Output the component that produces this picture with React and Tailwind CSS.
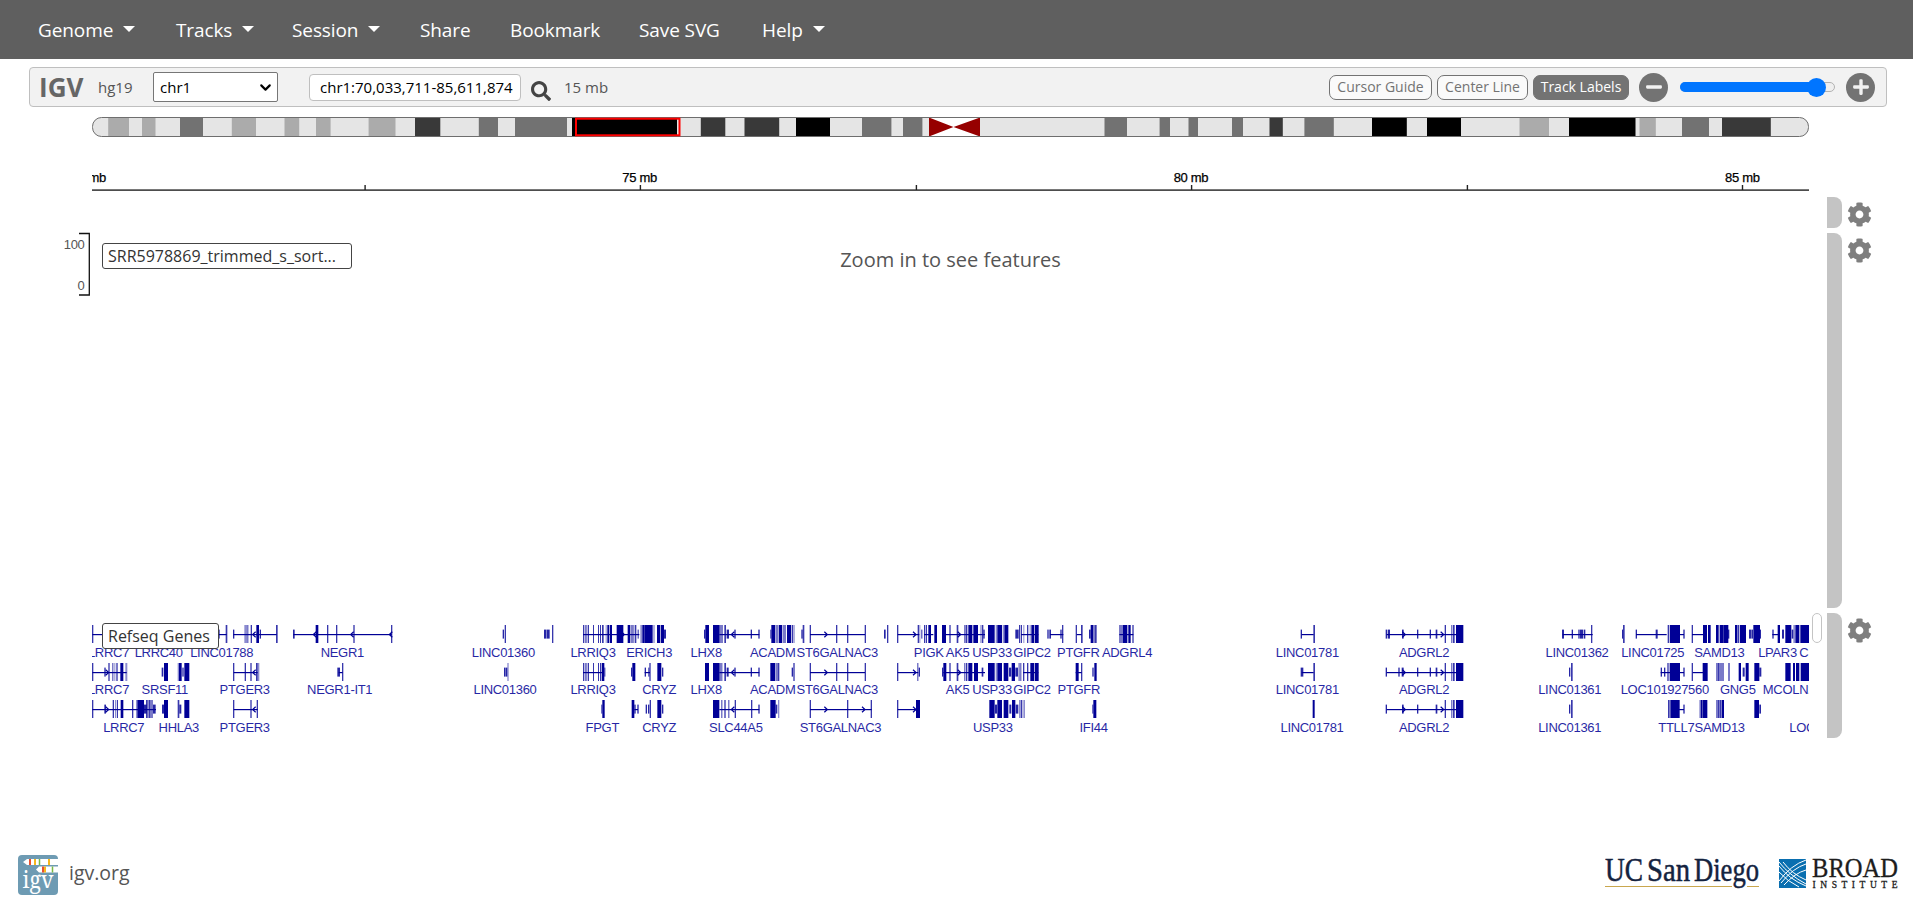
import React from "react";
import { FaCog, FaMinus, FaPlus, FaSearch } from "react-icons/fa";
import { ChevronDown } from "lucide-react";

const MENU = [
  { label: "Genome", caret: true, width: "w-[138px]" },
  { label: "Tracks", caret: true, width: "w-[116px]" },
  { label: "Session", caret: true, width: "w-[128px]" },
  { label: "Share", width: "w-[90px]" },
  { label: "Bookmark", width: "w-[129px]" },
  { label: "Save SVG", width: "w-[123px]" },
  { label: "Help", caret: true, width: "w-[80px]" },
];

const SHADE = { a: "#ababab", b: "#727272", c: "#393939", d: "#000000" };

// Stained bands of the chromosome: [start, end, shade]
const BANDS = [
  [108.2, 129, "a"], [142, 155.5, "a"], [180, 203, "b"], [231.8, 256, "a"],
  [284.5, 299.2, "a"], [316, 330.6, "a"], [368.6, 395.5, "a"], [415, 440.3, "c"],
  [478.8, 498, "b"], [515, 567, "b"], [572, 677, "d"], [700.8, 725.3, "c"],
  [744.5, 779.2, "c"], [796, 830, "d"], [862, 891.4, "b"], [903, 922.4, "b"],
  [1104.5, 1127, "b"], [1159.6, 1170, "b"], [1188.5, 1198, "b"], [1232, 1243, "b"],
  [1269.5, 1282.8, "c"], [1304.4, 1333.8, "b"], [1372, 1406.8, "d"], [1427, 1461, "d"],
  [1519.5, 1549, "a"], [1569, 1635.5, "d"], [1639.5, 1655.8, "a"], [1682, 1709, "b"],
  [1722, 1770.8, "c"],
];

// Features per row. T: coding exon, t: faint coding exon, S: non-coding exon,
// L: intron line, > and <: strand arrows. Units are thirds of a pixel.
const GENES = [
  {
    origin: 60,
    rows: [
      "T96,4 L97-127 S474,5 L474-500 T497,5 S519,4 L520-600 t553,8 T562,3 T572,4 <578 T589,8 S599,4 L600-650 T648,5 S699,5 L700-995 <760 T767,8 T801,4 T828,4 <872 T880,4 <988 T993,4",
      "T96,4 L97-200 S133,4 >146 T145,4 T157,3 t163,3 T169,4 T181,9 t196,6 S305,5 T312,12 t353,4 T357,8 S367,4 T373,15 T519,4 L521-593 T554,4 T571,4 <578 T588,5 t593,5 S832,8 T846,4 L836-848",
      "T96,4 L97-288 S133,5 >146 T158,4 t165,4 T171,3 T182,8 T216,4 t228,4 T232,20 S252,8 T258,5 t263,4 T267,5 T274,4 S279,8 S306,6 T312,12 T353,5 S358,6 T373,15 T519,4 L521-593 T571,4 <578 T590,4",
    ],
  },
  {
    origin: 440,
    rows: [
      "S188,4 T194,4 S312,7 S320,9 T336,4 T429,3 T434,3 t438,3 T443,4 T459,3 T474,3 T480,3 T486,5 L429-598 t497,3 T502,6 T510,6 T530,20 >553 T563,8 T574,4 t579,3 T584,5 S593,3 t601,6 T607,6 T613,25 t640,4 T651,10 T663,9 S672,6 S792,4 T796,11 T819,19 T838,4 T844,4 T853,5 S860,7 <874 L838-958 S883,4 S932,4 S955,4 S991,3 T994,12 T1009,4 T1016,10 T1028,3 T1033,4 T1041,12 T1055,4 t1060,4 S1084,4 T1088,5 T1109,4 L1110-1275 >1162 T1188,4 T1221,4 T1274,4",
      "S192,5 S198,4 t202,4 T429,3 T434,3 t438,3 T443,4 L429-490 T459,3 T474,3 T480,3 T485,8 S493,3 S573,4 T577,9 S614,4 S625,3 L614-630 T628,4 T652,12 S666,4 T795,12 T819,19 T838,4 T844,3 T853,5 S860,6 <874 L838-958 S883,4 S932,4 S955,4 T991,15 T1009,4 T1014,4 S1055,4 T1060,4 T1109,4 L1110-1275 >1162 T1188,4 T1221,4 T1274,4",
      "S484,3 T487,7 T575,8 S583,4 S592,4 L583-594 S617,4 S624,4 T629,4 T652,12 S666,4 T819,19 L838-958 T844,3 T853,4 T865,3 <874 T884,4 T933,4 S955,4 T991,16 S1007,5 t1014,4 T1109,4 L1110-1295 >1162 T1221,4 >1275 T1292,4",
    ],
  },
  {
    origin: 820,
    rows: [
      "S192,5 T201,4 T231,4 L233-298 >288 T293,4 t298,3 S304,3 T312,3 T317,4 L312-340 T325,8 T343,8 T366,12 T388,4 L366-495 T410,5 >422 T433,3 T437,5 T445,12 T460,14 t481,4 T486,4 S490,4 T504,20 t527,5 T532,14 t548,4 T553,12 S586,10 T597,4 T603,3 t610,3 L603-655 T621,4 t629,3 T634,8 T644,12 S682,4 S688,5 L690-730 S721,4 T726,4 T767,4 T783,5 L770-785 S807,5 T812,8 T821,3 T825,5 T898,4 T904,4 T909,13 T925,7 L898-940 T937,4",
      "T231,4 L233-295 >288 T292,3 S296,4 S366,4 T370,9 T388,4 L370-495 T410,5 >422 T433,3 T438,4 T445,12 T462,12 S485,5 T504,20 t527,5 T532,14 T551,14 S567,7 T575,10 S586,8 t595,5 T601,3 T609,4 T621,4 T631,11 L609-655 T644,12 T767,9 T783,4 L767-785 S817,4 T823,7",
      "T231,4 L233-295 >288 T288,12 T508,16 S525,6 T532,14 T551,14 S568,6 T576,10 S587,8 t597,4 T602,5 t610,5 S817,3 T820,9",
    ],
  },
  {
    origin: 1200,
    rows: [
      "S302,4 L305-341 T340,5 S557,4 S563,7 L560-780 S606,5 >616 S651,4 S689,4 S707,5 >731 T734,4 T754,3 T759,5 T768,22",
      "S302,8 L305-341 T340,5 S557,4 L560-780 S595,4 S605,6 >616 S651,4 S689,4 S707,5 >731 T734,4 T754,3 T759,5 T768,22",
      "T338,6 S557,4 L560-780 S606,5 >616 S651,4 S707,5 >731 T734,4 T754,3 T759,5 T768,22",
    ],
  },
  {
    origin: 1540,
    rows: [
      "S66,6 L68-158 S95,4 S115,4 S120,10 S132,4 T153,4 S246,3 T249,5 S287,4 L288-380 S347,6 T383,5 T390,30 S430,4 L415-432 T455,4 L456-490 T489,12 T504,8 T528,8 T539,12 T551,14 S564,4 T585,7 T593,5 T600,18 S627,6 S634,5 T640,20 S658,5 S697,4 L697-720 T713,7 S726,6 T736,18 S755,5 t760,5 T766,12 T781,27",
      "S87,4 T93,5 S362,4 L362-432 S372,4 T382,4 T389,31 S430,4 T455,4 L458-490 T488,15 T529,4 T534,5 T541,4 T547,4 T565,4 T596,7 S608,6 T617,9 T643,15 S658,6 T736,16 T759,6 T768,10 T782,26",
      "S87,4 T93,5 T384,5 T391,28 S430,4 L415-432 t478,4 T482,6 T489,13 T529,4 T534,5 T540,4 T545,7 T643,14 S658,5",
    ],
  },
];

const LABELS = [
  [
    [108.5, "LRRC7"], [158.7, "LRRC40"], [221.7, "LINC01788"], [342.3, "NEGR1"],
    [503.3, "LINC01360"], [593, "LRRIQ3"], [649.2, "ERICH3"], [706.2, "LHX8"],
    [772.7, "ACADM"], [837.3, "ST6GALNAC3"], [928.8, "PIGK"], [957.7, "AK5"],
    [992, "USP33"], [1032, "GIPC2"], [1078.3, "PTGFR"], [1127, "ADGRL4"],
    [1307.3, "LINC01781"], [1424, "ADGRL2"], [1577, "LINC01362"], [1652.7, "LINC01725"],
    [1719.3, "SAMD13"], [1777.5, "LPAR3"], [1814.5, "C1orf"],
  ],
  [
    [108.5, "LRRC7"], [164.8, "SRSF11"], [244.7, "PTGER3"], [339.7, "NEGR1-IT1"],
    [505, "LINC01360"], [593, "LRRIQ3"], [659.2, "CRYZ"], [706.2, "LHX8"],
    [772.7, "ACADM"], [837.3, "ST6GALNAC3"], [957.7, "AK5"], [992, "USP33"],
    [1032, "GIPC2"], [1078.8, "PTGFR"], [1307.3, "LINC01781"], [1424, "ADGRL2"],
    [1569.7, "LINC01361"], [1664.8, "LOC101927560"], [1737.8, "GNG5"], [1789, "MCOLN2"],
  ],
  [
    [123.7, "LRRC7"], [178.8, "HHLA3"], [244.7, "PTGER3"], [602.3, "FPGT"],
    [659.2, "CRYZ"], [735.8, "SLC44A5"], [840.5, "ST6GALNAC3"], [992.8, "USP33"],
    [1093.5, "IFI44"], [1312, "LINC01781"], [1424, "ADGRL2"], [1569.7, "LINC01361"],
    [1676.3, "TTLL7"], [1719.7, "SAMD13"], [1823, "LOC101927"],
  ],
];

const ROW_TOP = [625, 663, 700];
const BASELINE = [657, 694, 732];

function Feature({ code, origin, top }) {
  const kind = code[0];
  const [p, q] = code.slice(1).split(/[,-]/).map(Number);
  const x = origin + p / 3;
  if (kind === "L") return <rect x={x} y={top + 9} width={(q - p) / 3} height="1.2" />;
  if (kind === ">" || kind === "<") {
    const d = kind === ">" ? -3 : 3;
    return <path d={`M${x + d} ${top + 6.7}L${x} ${top + 9.5}L${x + d} ${top + 12.3}`} fill="none" stroke="#000096" strokeWidth="1.2" />;
  }
  if (kind === "S") return <rect x={x} y={top + 4.6} width={q / 3} height="9" opacity="0.85" />;
  return <rect x={x} y={top} width={q / 3} height="18" opacity={kind === "t" ? 0.45 : q < 6 ? 0.78 : 1} />;
}

function GeneTrack() {
  return (
    <svg width="1717" height="125" viewBox="92 613 1717 125" className="block" fill="#000096">
      {GENES.map((g) =>
        g.rows.map((row, r) =>
          row.split(" ").map((code, i) => (
            <Feature key={g.origin + "-" + r + "-" + i} code={code} origin={g.origin} top={ROW_TOP[r]} />
          ))
        )
      )}
      <g className="font-['Liberation_Sans',Arial,sans-serif] text-[13px] tracking-[-0.3px]" textAnchor="middle" opacity="0.85">
        {LABELS.map((row, r) => row.map(([x, t]) => <text key={r + "-" + x} x={x} y={BASELINE[r]}>{t}</text>))}
      </g>
    </svg>
  );
}

function Ideogram() {
  return (
    <svg width="1717" height="20" viewBox="92 117 1717 20" className="block">
      <defs>
        <clipPath id="chromosome"><rect x="92.5" y="117.5" width="1716" height="19" rx="9" /></clipPath>
      </defs>
      <g clipPath="url(#chromosome)">
        <rect x="92" y="117" width="1717" height="20" fill="#e5e5e5" />
        {BANDS.map(([a, b, s]) => <rect key={a} x={a} y="117" width={b - a} height="20" fill={SHADE[s]} />)}
        <rect x="929" y="117" width="51" height="20" fill="#fff" />
        <path d="M929 117.5L953.5 127L929 136.5ZM980 117.5L953.5 127L980 136.5Z" fill="#960000" />
      </g>
      <rect x="92.5" y="117.5" width="1716" height="19" rx="9" fill="none" stroke="#6e6e6e" />
      <path d="M929 117.5H980M929 136.5H980" stroke="#6e6e6e" />
      <rect x="576" y="118.7" width="103.5" height="16.6" fill="none" stroke="#f00" strokeWidth="2" />
    </svg>
  );
}

function Ruler() {
  return (
    <svg width="1717" height="60" viewBox="92 137 1717 60" className="block">
      <rect x="92" y="189.4" width="1717" height="1.4" fill="#222" />
      {[365, 640.3, 916.3, 1191.5, 1467.3, 1742.4].map((x) => (
        <rect key={x} x={x - 0.6} y="185" width="1.4" height="5" fill="#222" />
      ))}
      <g className="font-['Liberation_Sans',Arial,sans-serif] text-[13px] tracking-[-0.3px]" textAnchor="middle" fill="#000" stroke="#000" strokeWidth="0.25">
        <text x="88.7" y="181.5">70 mb</text>
        <text x="639.6" y="181.5">75 mb</text>
        <text x="1191" y="181.5">80 mb</text>
        <text x="1742.3" y="181.5">85 mb</text>
      </g>
    </svg>
  );
}

function TrackLabel({ children, className }) {
  return (
    <div className={`absolute left-[10px] h-[26px] rounded-[3px] border border-[#444] bg-white px-[5px] text-[16px] leading-[24px] whitespace-nowrap text-[#333] ${className}`}>
      {children}
    </div>
  );
}

function Handle({ className }) {
  return (
    <div className={`flex gap-[5px] ${className}`}>
      <div className="w-[15px] rounded-r-[8px] bg-[#c4c4c4]" />
      <FaCog className="mt-[5px] size-[25px] text-[#7f7f7f]" />
    </div>
  );
}

function ToggleButton({ children, className }) {
  return (
    <button className={`flex h-[25px] items-center justify-center rounded-[7px] border border-[#737373] pb-[2px] text-[14px] whitespace-nowrap ${className}`}>
      {children}
    </button>
  );
}

function IgvLogo() {
  return (
    <svg width="40" height="40" viewBox="0 0 40 40">
      <rect width="40" height="40" rx="4" fill="#6e9bb3" />
      <path d="M5 7L9 4H40V10H9ZM18 14.500L21 11.500H40V17.500H21Z" fill="#fff" />
      <path d="M12 4V10" stroke="#e8502f" strokeWidth="2" />
      <path d="M17 4V10M31 4V10M27 11.500V17.500" stroke="#f6b81c" strokeWidth="2" />
      <path d="M21.500 4V10M34.500 11.500V17.500" stroke="#79b943" strokeWidth="1.500" />
      <path d="M25 11.500V17.500" stroke="#e8502f" strokeWidth="2" />
      <text x="4.500" y="33" textLength="31" lengthAdjust="spacingAndGlyphs" fill="#fff" fontSize="23" fontFamily="Noto Serif, DejaVu Serif, Liberation Serif, serif">igv</text>
    </svg>
  );
}

function UcsdLogo() {
  return (
    <svg width="155" height="34" viewBox="0 0 155 34">
      <g fill="#14233f" stroke="#14233f" strokeWidth="0.5" fontFamily="Liberation Serif, serif" fontSize="33">
        <text x="0" y="24" textLength="38" lengthAdjust="spacingAndGlyphs">UC</text>
        <text x="42" y="24" textLength="43" lengthAdjust="spacingAndGlyphs">San</text>
        <text x="89" y="24" textLength="65" lengthAdjust="spacingAndGlyphs">Diego</text>
      </g>
      <path d="M0 29.500H127M142 29.500H154" stroke="#c9a74e" strokeWidth="1.200" />
    </svg>
  );
}

function BroadLogo() {
  return (
    <svg width="120" height="34" viewBox="0 0 120 34">
      <rect x="0" y="2" width="27" height="29" fill="#0a6fb0" />
      <g fill="none" stroke="#fff" strokeWidth="1">
        <path d="M27 3Q12 8 0 24M27 7Q14 11 2 26M27 13Q16 16 5 28" />
        <path d="M0 5Q10 18 27 27M0 9Q10 22 27 29M4 5Q13 17 27 23M0 15Q8 24 20 30" />
      </g>
      <g fill="#1d1d1d" stroke="#1d1d1d" strokeWidth="0.3" fontFamily="Liberation Serif, serif">
        <text x="33" y="20" fontSize="26.500" textLength="86" lengthAdjust="spacingAndGlyphs">BROAD</text>
        <text x="33.500" y="30.500" fontSize="9.500" textLength="85">INSTITUTE</text>
      </g>
    </svg>
  );
}

export default function App() {
  return (
    <div className="flex h-[897px] w-[1913px] flex-col overflow-hidden bg-white font-['Open_Sans','Noto_Sans',sans-serif]">
      <nav className="flex h-[59px] shrink-0 items-center bg-[#5f5f5f] pt-[2px] pl-[38px] text-[19px] tracking-[-0.1px] text-white">
        {MENU.map((m) => (
          <div key={m.label} className={`flex shrink-0 items-center whitespace-nowrap ${m.width}`}>
            {m.label}
            {m.caret && <span className="mb-[3px] ml-[10px] border-x-[6px] border-t-[6px] border-x-transparent border-t-white" />}
          </div>
        ))}
      </nav>

      <div className="mt-[8px] ml-[29px] flex h-[40px] w-[1858px] shrink-0 items-center rounded-[4px] border border-[#bfbfbf] bg-[#f2f2f2] pl-[10px] text-[15px] text-[#555]">
        <svg width="44" height="24" viewBox="0 0 44 24">
          <text x="-1" y="21.500" fontFamily="Open Sans, sans-serif" fontWeight="700" fontSize="26.500" textLength="44.500" lengthAdjust="spacingAndGlyphs" fill="#666">IGV</text>
        </svg>
        <span className="ml-[14px] w-[55px]">hg19</span>
        <div className="flex h-[30px] w-[125px] items-center justify-between rounded-[2px] border border-[#767676] bg-white pr-[3px] pl-[6px] text-black">
          chr1
          <ChevronDown className="size-[17px]" strokeWidth={3} />
        </div>
        <div className="ml-[31px] flex h-[27px] w-[212px] items-center rounded-[4px] border border-[#bfbfbf] bg-white pl-[10px] whitespace-nowrap text-black">
          chr1:70,033,711-85,611,874
        </div>
        <FaSearch className="mt-[8px] ml-[10px] size-[20px] text-[#444]" />
        <span className="ml-[13px]">15 mb</span>
        <div className="ml-auto flex items-center">
          <ToggleButton className="mr-[5px] w-[103px] bg-white/60 text-[#737373]">Cursor Guide</ToggleButton>
          <ToggleButton className="mr-[5px] w-[91px] bg-white/60 text-[#737373]">Center Line</ToggleButton>
          <ToggleButton className="mr-[10px] w-[96px] bg-[#737373] text-white">Track Labels</ToggleButton>
          <div className="mr-[12px] flex size-[29px] items-center justify-center rounded-full bg-[#737373]">
            <FaMinus className="size-[18px] text-[#f2f2f2]" />
          </div>
          <div className="flex h-[10px] w-[155px] items-center rounded-full border border-[#b2b2b2] bg-[#efefef]">
            <div className="-ml-px h-[10px] w-[137px] shrink-0 rounded-full bg-[#0075ff]" />
            <div className="-ml-[10px] size-[19px] shrink-0 rounded-full bg-[#0075ff]" />
          </div>
          <div className="mr-[11px] ml-[11px] flex size-[29px] items-center justify-center rounded-full bg-[#737373]">
            <FaPlus className="size-[18px] text-[#f2f2f2]" />
          </div>
        </div>
      </div>

      <main className="mt-[10px] flex h-[621px] shrink-0">
        <div className="w-[92px] pt-[115px]">
          <svg width="92" height="65" viewBox="0 232 92 65" className="block">
            <path d="M79 233.500H89.300V295H79" fill="none" stroke="#111" strokeWidth="1.300" />
            <g className="font-['Liberation_Sans',Arial,sans-serif] text-[13px] tracking-[-0.3px]" textAnchor="end" fill="#555">
              <text x="84.500" y="249">100</text>
              <text x="84.500" y="290">0</text>
            </g>
          </svg>
        </div>
        <div className="flex w-[1717px] flex-col">
          <Ideogram />
          <Ruler />
          <div className="relative mt-[36px] flex h-[375px] justify-center pt-[13px]">
            <TrackLabel className="top-[10px] w-[250px]">SRR5978869_trimmed_s_sort...</TrackLabel>
            <div className="h-[28px] text-[20px] leading-[28px] text-[#555]">Zoom in to see features</div>
          </div>
          <div className="relative mt-[5px] h-[125px]">
            <GeneTrack />
            <TrackLabel className="top-[10px] w-[117px]">Refseq Genes</TrackLabel>
          </div>
        </div>
        <div className="w-[18px] pt-[496px] pl-[3px]">
          <div className="h-[30px] w-[10px] rounded-[5px] border border-[#c4c4c4]" />
        </div>
        <div className="flex flex-col gap-[5px] pt-[80px]">
          <Handle className="h-[31px]" />
          <Handle className="h-[375px]" />
          <Handle className="h-[125px]" />
        </div>
      </main>

      <footer className="mt-auto flex h-[42px] shrink-0 items-start pl-[18px] text-[#555]">
        <IgvLogo />
        <span className="ml-[11px] text-[19.5px] leading-[36px]">igv.org</span>
        <div className="mt-[2px] ml-auto flex gap-[19px] pr-[14px]">
          <UcsdLogo />
          <BroadLogo />
        </div>
      </footer>
    </div>
  );
}
